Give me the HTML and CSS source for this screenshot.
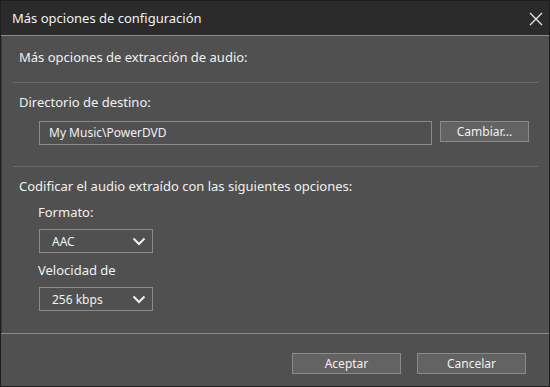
FILE: index.html
```html
<!DOCTYPE html>
<html lang="es">
<head>
    <meta charset="UTF-8">
    <title>Más opciones de configuración</title>
    <link rel="stylesheet" href="styles.css">
</head>
<body>
    <div class="dialog">
        <div class="titlebar">
            <span class="title">Más opciones de configuración</span>
            <svg class="close" width="14" height="14" viewBox="0 0 14 14">
                <path d="M1 1 L13 13 M13 1 L1 13" stroke="#e8e8e8" stroke-width="1.3"/>
            </svg>
        </div>

        <div class="content">
            <div class="section top">
                <p class="label">Más opciones de extracción de audio:</p>
            </div>

            <div class="section dest">
                <p class="label">Directorio de destino:</p>
                <div class="path-row">
                    <div class="field">My Music\PowerDVD</div>
                    <button class="btn change">Cambiar...</button>
                </div>
            </div>

            <div class="section encode">
                <p class="label">Codificar el audio extraído con las siguientes opciones:</p>
                <p class="label sub">Formato:</p>
                <div class="select">
                    <span>AAC</span>
                    <svg width="14" height="9" viewBox="0 0 14 9"><path d="M1.5 1.5 L7 7 L12.5 1.5" fill="none" stroke="#f0f0f0" stroke-width="2"/></svg>
                </div>
                <p class="label sub">Velocidad de</p>
                <div class="select">
                    <span>256 kbps</span>
                    <svg width="14" height="9" viewBox="0 0 14 9"><path d="M1.5 1.5 L7 7 L12.5 1.5" fill="none" stroke="#f0f0f0" stroke-width="2"/></svg>
                </div>
            </div>
        </div>

        <div class="footer">
            <button class="btn action">Aceptar</button>
            <button class="btn action">Cancelar</button>
        </div>
    </div>
</body>
</html>
```

FILE: styles.css
```css
html, body {
    margin: 0;
    padding: 0;
    background: #1e1e1e;
}
body {
    font-family: 'Noto Sans', 'Open Sans', sans-serif;
    font-size: 13px;
    color: #f0f0f0;
}
.dialog {
    width: 548px;
    height: 385px;
    border: 1px solid #1e1e1e;
    background: #505050;
    display: flex;
    flex-direction: column;
}
.titlebar {
    height: 34px;
    background: #2b2b2b;
    border-bottom: 1px solid #8c8c8c;
    display: flex;
    align-items: center;
    justify-content: space-between;
    padding: 0 6px 0 11px;
}
.title {
    font-size: 13px;
    color: #f2f2f2;
}
.close {
    margin-top: 1px;
}
.content {
    flex: 1;
    border-left: 1px solid #3a3a3a;
    padding: 0 11px 0 11px;
}
.label {
    margin: 0;
    line-height: 18px;
}
.section {
    border-bottom: 1px solid #6a6a6a;
    padding-left: 6px;
}
.top {
    padding-top: 12px;
    height: 34px;
}
.dest {
    padding-top: 10px;
    height: 73px;
}
.path-row {
    display: flex;
    align-items: flex-start;
    margin-top: 10px;
    padding-left: 20px;
}
.field {
    box-sizing: border-box;
    width: 393px;
    height: 24px;
    border: 1px solid #8a8a8a;
    line-height: 22px;
    padding-left: 9px;
    font-size: 12px;
}
.btn {
    font-family: inherit;
    font-size: 12px;
    color: #f0f0f0;
    background: #636363;
    border: 1px solid #8a8a8a;
    padding: 0;
    height: 21px;
    line-height: 19px;
}
.change {
    width: 89px;
    margin-left: 8px;
}
.encode {
    border-bottom: none;
    padding-top: 10px;
}
.sub {
    margin-left: 19px;
    margin-top: 8px;
}
.select {
    margin: 8px 0 0 20px;
    width: 114px;
    height: 24px;
    box-sizing: border-box;
    border: 1px solid #8a8a8a;
    display: flex;
    align-items: center;
    justify-content: space-between;
    padding: 0 6px 0 12px;
    font-size: 12px;
}
.footer {
    height: 53px;
    border-top: 1px solid #8c8c8c;
    display: flex;
    justify-content: flex-end;
    gap: 16px;
    padding: 19px 23px 0 0;
    box-sizing: border-box;
}
.action {
    width: 109px;
}
```
